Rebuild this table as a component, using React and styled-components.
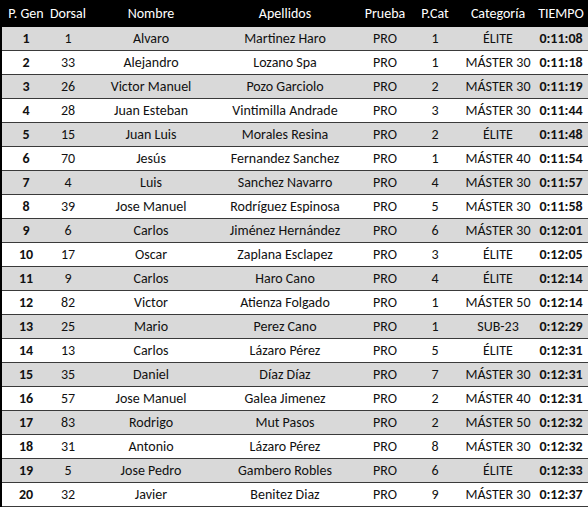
import React from 'react';
import styled, {createGlobalStyle} from 'styled-components';

const Global = createGlobalStyle`
  html, body { margin:0; padding:0; background:#fff; overflow:hidden; }
  body { font-family: Carlito, Calibri, Lato, "Liberation Sans", sans-serif; }
`;

const cols = '48px 36px 130px 138px 62px 38px 88px 38px 1fr';

const Table = styled.div`
  width:588px;
  border-left:2px solid #000;
  box-sizing:border-box;
`;
const Head = styled.div`
  display:grid; grid-template-columns:${cols};
  height:26px;
  background:#000; color:#fff;
  font-weight:700; font-size:14px;
  border-bottom:1px solid #000;
`;
const Row = styled.div`
  display:grid; grid-template-columns:${cols};
  height:23px;
  background:${p=>p.shade?'#d9d9d9':'#fff'};
  border-bottom:1px solid #3a3a3a;
  color:#111; font-size:14px;
`;
const Cell = styled.div`
  display:flex; align-items:center; justify-content:center;
  white-space:nowrap; min-width:0;
  font-weight:${p=>p.bold?700:400};
`;

const headers = ['P. Gen','Dorsal','Nombre','Apellidos','Prueba','P.Cat','Categoría','TIEMPO'];

const rows = [
  [1,1,'Alvaro','Martinez Haro',1,'ÉLITE','0:11:08'],
  [2,33,'Alejandro','Lozano Spa',1,'MÁSTER 30','0:11:18'],
  [3,26,'Victor Manuel','Pozo Garciolo',2,'MÁSTER 30','0:11:19'],
  [4,28,'Juan Esteban','Vintimilla Andrade',3,'MÁSTER 30','0:11:44'],
  [5,15,'Juan Luis','Morales Resina',2,'ÉLITE','0:11:48'],
  [6,70,'Jesús','Fernandez Sanchez',1,'MÁSTER 40','0:11:54'],
  [7,4,'Luis','Sanchez Navarro',4,'MÁSTER 30','0:11:57'],
  [8,39,'Jose Manuel','Rodríguez Espinosa',5,'MÁSTER 30','0:11:58'],
  [9,6,'Carlos','Jiménez Hernández',6,'MÁSTER 30','0:12:01'],
  [10,17,'Oscar','Zaplana Esclapez',3,'ÉLITE','0:12:05'],
  [11,9,'Carlos','Haro Cano',4,'ÉLITE','0:12:14'],
  [12,82,'Victor','Atienza Folgado',1,'MÁSTER 50','0:12:14'],
  [13,25,'Mario','Perez Cano',1,'SUB-23','0:12:29'],
  [14,13,'Carlos','Lázaro Pérez',5,'ÉLITE','0:12:31'],
  [15,35,'Daniel','Díaz Díaz',7,'MÁSTER 30','0:12:31'],
  [16,57,'Jose Manuel','Galea Jimenez',2,'MÁSTER 40','0:12:31'],
  [17,83,'Rodrigo','Mut Pasos',2,'MÁSTER 50','0:12:32'],
  [18,31,'Antonio','Lázaro Pérez',8,'MÁSTER 30','0:12:32'],
  [19,5,'Jose Pedro','Gambero Robles',6,'ÉLITE','0:12:33'],
  [20,32,'Javier','Benitez Diaz',9,'MÁSTER 30','0:12:37'],
];

export default function App() {
  return (
    <>
      <Global/>
      <Table>
        <Head>
          {headers.map(h=><Cell key={h}>{h}</Cell>)}
          <Cell/>
        </Head>
        {rows.map(([pos,dorsal,nombre,apellidos,pcat,cat,tiempo],i)=>(
          <Row key={pos} shade={i%2===0}>
            <Cell bold>{pos}</Cell>
            <Cell>{dorsal}</Cell>
            <Cell>{nombre}</Cell>
            <Cell>{apellidos}</Cell>
            <Cell>PRO</Cell>
            <Cell>{pcat}</Cell>
            <Cell>{cat}</Cell>
            <Cell bold>{tiempo}</Cell>
            <Cell/>
          </Row>
        ))}
      </Table>
    </>
  );
}
